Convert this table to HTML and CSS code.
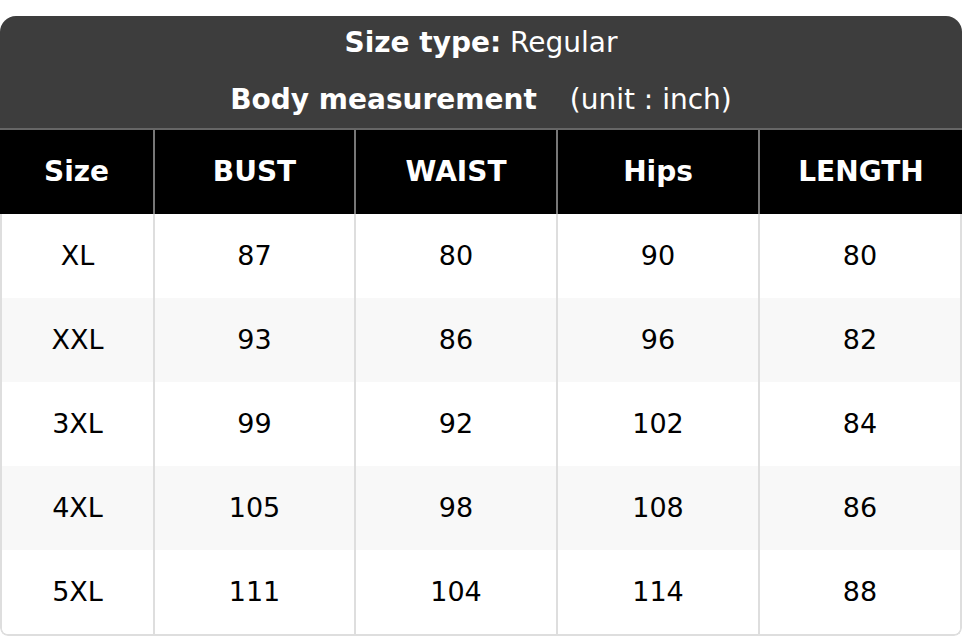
FILE: index.html
```html
<!DOCTYPE html>
<html>
<head>
<meta charset="utf-8">
<link rel="stylesheet" href="styles.css">
</head>
<body>
<div class="card">
  <div class="title">
    <div class="line line1"><span><b>Size type:</b> Regular</span></div>
    <div class="line line2"><span><b>Body measurement</b><span class="unit">(unit : inch)</span></span></div>
  </div>
  <div class="head">
    <div class="hc">Size</div>
    <div class="hc">BUST</div>
    <div class="hc">WAIST</div>
    <div class="hc">Hips</div>
    <div class="hc">LENGTH</div>
  </div>
  <div class="body">
    <div class="row"><div class="c">XL</div><div class="c">87</div><div class="c">80</div><div class="c">90</div><div class="c">80</div></div>
    <div class="row alt"><div class="c">XXL</div><div class="c">93</div><div class="c">86</div><div class="c">96</div><div class="c">82</div></div>
    <div class="row"><div class="c">3XL</div><div class="c">99</div><div class="c">92</div><div class="c">102</div><div class="c">84</div></div>
    <div class="row alt"><div class="c">4XL</div><div class="c">105</div><div class="c">98</div><div class="c">108</div><div class="c">86</div></div>
    <div class="row"><div class="c">5XL</div><div class="c">111</div><div class="c">104</div><div class="c">114</div><div class="c">88</div></div>
  </div>
</div>
</body>
</html>
```

FILE: styles.css
```css
* { box-sizing: border-box; }
html, body { margin: 0; padding: 0; background: #fff; }
body {
  font-family: "DejaVu Sans", sans-serif;
  font-size: 27px;
  color: #000;
  padding-top: 16px;
  width: 962px;
}
.card {
  width: 962px;
  border-radius: 16px 16px 8px 8px;
  overflow: hidden;
}
.title {
  background: #3d3d3d;
  color: #fff;
  border-bottom: 2px solid #666;
  font-size: 28px;
}
.line {
  height: 56px;
  display: flex;
  align-items: center;
  justify-content: center;
}
.line1 { padding-bottom: 4px; }
.line2 { padding-bottom: 2px; }
.line b { font-weight: bold; }
.unit { margin-left: 33px; }
.head {
  display: grid;
  grid-template-columns: 153px 201px 202px 202px 1fr;
  background: #000;
  color: #fff;
  font-weight: bold;
  font-size: 28px;
}
.hc {
  height: 84px;
  display: flex;
  align-items: center;
  justify-content: center;
  padding-bottom: 2px;
}
.hc + .hc { border-left: 2px solid #777; }
.body {
  border: 2px solid #dedede;
  border-top: none;
  border-radius: 0 0 8px 8px;
  overflow: hidden;
}
.row {
  display: grid;
  grid-template-columns: 151px 201px 202px 202px 1fr;
  background: #fff;
}
.row.alt { background: #f8f8f8; }
.c {
  height: 84px;
  display: flex;
  align-items: center;
  justify-content: center;
  padding-bottom: 2px;
}
.c + .c { border-left: 2px solid #dedede; }
```
